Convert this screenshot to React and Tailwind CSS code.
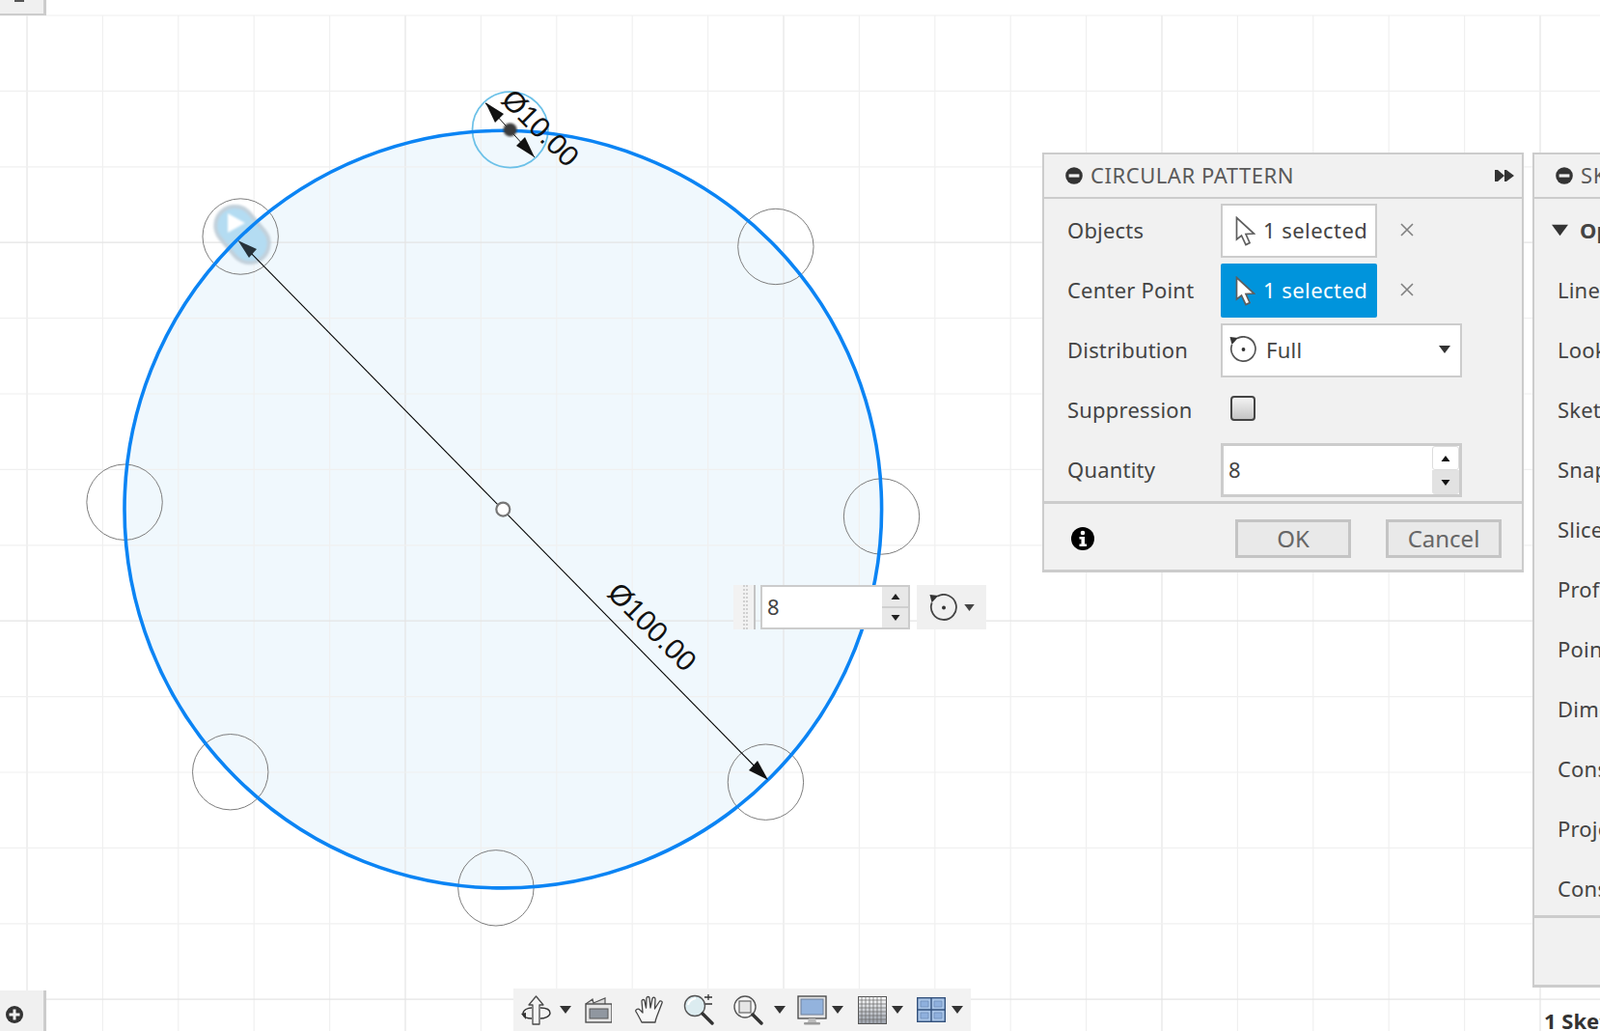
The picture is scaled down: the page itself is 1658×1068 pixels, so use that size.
import React from "react";

const CX = 521.3, CY = 527.6, R = 392.3, r = 39.2;
const minorX = Array.from({ length: 21 }, (_, i) => 28 + 78.4 * i);
const minorY = Array.from({ length: 14 }, (_, i) => 16 + 78.4 * i);
const pts = Array.from({ length: 8 }, (_, i) => {
  const a = ((1.08 + 45 * i) * Math.PI) / 180;
  return [CX + R * Math.sin(a), CY - R * Math.cos(a)];
});

function Canvas() {
  return (
    <svg className="absolute inset-0" width="1658" height="1068" viewBox="0 0 1658 1068">
      <defs>
        <filter id="soft"><feGaussianBlur stdDeviation="1" /></filter>
        <filter id="soft2"><feGaussianBlur stdDeviation="0.8" /></filter>
      </defs>
      <circle cx={CX} cy={CY} r={R} fill="#f0f8fd" />
      {minorX.map((x, i) => (
        <line key={i} x1={x} x2={x} y1="16" y2="1068" stroke={i % 5 === 0 ? "#e4e4e4" : "#f0f0f0"} strokeWidth="1.2" />
      ))}
      {minorY.map((y, i) => (
        <line key={i} x1="0" x2="1658" y1={y} y2={y} stroke={i % 5 === 3 ? "#e4e4e4" : "#f0f0f0"} strokeWidth="1.2" />
      ))}
      <circle cx={pts[0][0]} cy={pts[0][1] - 1} r={r} fill="none" stroke="#6cc1e8" strokeWidth="1.8" />
      {pts.slice(1).map((p, i) => (
        <circle key={i} cx={p[0]} cy={p[1]} r={r} fill="none" stroke="#7d7d7d" strokeWidth="1" />
      ))}
      {/* start handle */}
      <g transform="rotate(50 251 243)">
        <rect x="219" y="223" width="64" height="40" rx="20" fill="#b4dcf2" stroke="#c2d0da" strokeWidth="4" filter="url(#soft2)" />
      </g>
      <path d="M236 221 L254 231 L236 241 Z" fill="#ffffff" filter="url(#soft2)" />
      <circle cx={CX} cy={CY} r={R} fill="none" stroke="#0b84f4" strokeWidth="3.6" />
      {/* large diameter */}
      <line x1="250" y1="252" x2="792" y2="804" stroke="#000" strokeWidth="1.1" />
      <path d="M246.5 249 L266 258 L258 267 Z" fill="#26323a" />
      <path d="M796 808 L776 798 L785 788 Z" fill="#111" />
      <circle cx={CX} cy={CY} r="7" fill="#ffffff" stroke="#777" strokeWidth="2.2" />
      <text transform="translate(628 616) rotate(45)" fontFamily="'Liberation Sans', sans-serif" fontSize="30" fill="#111">Ø100.00</text>
      {/* small diameter */}
      <line x1="503" y1="107" x2="554" y2="163" stroke="#111" strokeWidth="1" />
      <path d="M503 106 L522 118 L513 127 Z" fill="#111" />
      <path d="M554 163 L535 151 L544 142 Z" fill="#111" />
      <circle cx="528.6" cy="134.4" r="7" fill="#3a3a3a" filter="url(#soft)" />
      <text transform="translate(518 105) rotate(45)" fontFamily="'Liberation Sans', sans-serif" fontSize="30" fill="#111">Ø10.00</text>
    </svg>
  );
}

function Cursor() {
  return (
    <svg width="21" height="31" viewBox="0 0 21 31" className="shrink-0">
      <path d="M1.5 1.5 L1.5 24 L6.5 20 L11 29.5 L15 27.5 L11 18.5 L19.5 18 Z" fill="#ffffff" stroke="#5e5e5e" strokeWidth="1.7" strokeLinejoin="miter" />
    </svg>
  );
}

function Rotate({ size = 28, color = "#555" }) {
  return (
    <svg width={size} height={size} viewBox="0 0 28 28" className="shrink-0">
      <path d="M8 2.6 A12.6 12.6 0 1 1 2.6 9" fill="none" stroke={color} strokeWidth="1.7" />
      <path d="M0.5 1 L9 2 L2.5 9 Z" fill="#333" />
      <circle cx="14.5" cy="14" r="1.9" fill="#333" />
    </svg>
  );
}

function Caret({ w = 12, h = 8, color = "#333" }) {
  return (
    <svg width={w} height={h} viewBox="0 0 12 8" className="shrink-0">
      <path d="M0 0 H12 L6 8 Z" fill={color} />
    </svg>
  );
}

function MinusDot() {
  return (
    <svg width="18" height="18" viewBox="0 0 18 18" className="shrink-0">
      <circle cx="9" cy="9" r="8.8" fill="#333" />
      <rect x="3.6" y="7.4" width="10.8" height="3.2" fill="#eee" />
    </svg>
  );
}

function Close() {
  return (
    <svg width="14" height="14" viewBox="0 0 14 14" className="shrink-0">
      <path d="M1 1 L13 13 M13 1 L1 13" stroke="#808080" strokeWidth="1.6" />
    </svg>
  );
}

function Row({ label, children }) {
  return (
    <div className="flex h-[56px] items-center">
      <div className="w-[183px] pb-[2px] pl-[24px] text-[22px] leading-none tracking-[0.2px] text-[#444]">{label}</div>
      {children}
    </div>
  );
}

function Selection({ active }) {
  return (
    <div className={active
      ? "flex h-[56px] w-[162px] items-center rounded-[2px] bg-[#0094dc] pl-[15px] text-[22px] tracking-[0.45px] text-white"
      : "flex h-[56px] w-[162px] items-center border-2 border-[#cccccc] bg-white pl-[13px] text-[22px] tracking-[0.45px] text-[#444]"}>
      <Cursor />
      <span className="mb-[2px] ml-[8px] whitespace-nowrap">1 selected</span>
    </div>
  );
}

function CircularPanel() {
  return (
    <div className="absolute left-[1080px] top-[158px] flex w-[499px] flex-col bg-[#f1f1f1] [font-family:'Open_Sans',sans-serif]">
      <div className="flex h-[48px] items-center border-2 border-[#cccccc] pl-[22px] pr-[8px]">
        <MinusDot />
        <span className="mb-[1px] ml-[8px] text-[22px] tracking-[0.55px] text-[#5a5a5a]">CIRCULAR PATTERN</span>
        <svg width="20" height="12" viewBox="0 0 20 12" className="ml-auto">
          <path d="M0 0 H3 V12 H0 Z M3 0 L10 6 L3 12 Z M10 0 H12 V12 H10 Z M12 0 L20 6 L12 12 Z" fill="#333" />
        </svg>
      </div>
      <div className="flex flex-col gap-[6px] border-x-2 border-b-[3px] border-[#cccccc] pb-[4px] pt-[5px]">
        <Row label="Objects">
          <Selection />
          <div className="ml-[24px] mb-[2px]"><Close /></div>
        </Row>
        <Row label="Center Point">
          <Selection active />
          <div className="ml-[24px] mb-[2px]"><Close /></div>
        </Row>
        <Row label="Distribution">
          <div className="flex h-[56px] w-[250px] items-center border-2 border-[#cccccc] bg-white pl-[7px] pr-[10px] text-[22px] text-[#444]">
            <div className="mb-[2px]"><Rotate /></div>
            <span className="mb-[2px] ml-[10px] tracking-[0.3px]">Full</span>
            <div className="ml-auto mb-[2px]"><Caret /></div>
          </div>
        </Row>
        <Row label="Suppression">
          <div className="mb-[4px] ml-[10px] h-[26px] w-[26px] rounded-[4px] border-2 border-[#444] bg-gradient-to-b from-[#f4f4f4] to-[#c4c4c4]" />
        </Row>
        <Row label="Quantity">
          <div className="flex h-[56px] w-[250px] border-[3px] border-[#cccccc] bg-white">
            <div className="flex flex-1 items-center pb-[2px] pl-[5px] text-[22px] text-[#444]">8</div>
            <div className="flex w-[28px] flex-col">
              <div className="flex h-[25px] items-center justify-center rounded-[3px] border border-[#dddddd] bg-white"><div className="rotate-180"><Caret w={10} h={6} color="#111" /></div></div>
              <div className="flex flex-1 items-center justify-center rounded-b-[3px] bg-[#e2e2e2]"><Caret w={10} h={6} color="#111" /></div>
            </div>
          </div>
        </Row>
      </div>
      <div className="flex h-[71px] items-center border-x-2 border-b-[3px] border-[#cccccc] pl-[28px] pt-[3px]">
        <svg width="24" height="24" viewBox="0 0 24 24" className="shrink-0">
          <circle cx="12" cy="12" r="12" fill="#000" />
          <circle cx="12" cy="6" r="2.3" fill="#fff" />
          <path d="M8.5 10 H14 V17.5 H16 V20 H8.5 V17.5 H10.5 V12.5 H8.5 Z" fill="#fff" />
        </svg>
        <button className="ml-[146px] h-[40px] w-[120px] border-[3px] border-[#c4c4c4] bg-[#e9e9e9] text-[24px] leading-none text-[#666]">OK</button>
        <button className="ml-[36px] h-[40px] w-[120px] border-[3px] border-[#c4c4c4] bg-[#e9e9e9] text-[24px] leading-none text-[#666]">Cancel</button>
      </div>
    </div>
  );
}

const paletteRows = ["Linetype", "Look At", "Sketch Grid", "Snap", "Slice", "Profile", "Points", "Dimensions", "Constraints", "Projected", "Construction"];

function PalettePanel() {
  return (
    <div className="absolute left-[1588px] top-[158px] flex w-[300px] flex-col bg-[#f1f1f1] [font-family:'Open_Sans',sans-serif]">
      <div className="flex h-[48px] items-center border-2 border-[#cccccc] pl-[22px]">
        <MinusDot />
        <span className="mb-[1px] ml-[8px] text-[22px] tracking-[0.55px] text-[#5a5a5a]">SKETCH PALETTE</span>
      </div>
      <div className="flex h-[745px] flex-col overflow-hidden border-x-2 border-b-[3px] border-[#cccccc] pt-[2px]">
        <div className="flex h-[62px] shrink-0 items-center pb-[2px] pl-[18px]">
          <Caret w={17} h={13} color="#333" />
          <span className="ml-[12px] text-[22px] font-bold text-[#444]">Options</span>
        </div>
        {paletteRows.map((t) => (
          <div key={t} className="flex h-[62px] shrink-0 items-center pb-[2px] pl-[24px] text-[22px] tracking-[0.2px] text-[#444]">{t}</div>
        ))}
      </div>
      <div className="h-[72px] border-x-2 border-b-[3px] border-[#cccccc]" />
    </div>
  );
}

function FloatingInput() {
  return (
    <div className="absolute left-[760px] top-[606px] flex h-[46px] items-stretch [font-family:'Open_Sans',sans-serif]">
      <div className="flex w-[23px] justify-end bg-[#f2f2f2]">
        <div className="mr-[6px] w-[5px] border-x-2 border-dotted border-[#d0d0d0]" />
        <div className="w-[2px] bg-[#c4c4c4]" />
      </div>
      <div className="ml-[5px] flex w-[155px] border-2 border-[#cccccc] bg-white">
        <div className="flex flex-1 items-center pb-[2px] pl-[5px] text-[22px] text-[#444]">8</div>
        <div className="flex w-[27px] flex-col bg-[#e8e8e8]">
          <div className="flex flex-1 items-center justify-center border-b-2 border-[#cfcfcf]"><div className="rotate-180"><Caret w={10} h={6} color="#222" /></div></div>
          <div className="flex flex-1 items-center justify-center"><Caret w={10} h={6} color="#222" /></div>
        </div>
      </div>
      <div className="ml-[7px] flex w-[72px] items-center bg-[#f0f0f0] pl-[13px]">
        <Rotate size={29} color="#444" />
        <div className="ml-[7px]"><Caret w={11} h={7} color="#444" /></div>
      </div>
    </div>
  );
}

function Toolbar() {
  return (
    <div className="absolute left-[532px] top-[1024px] flex h-[44px] w-[474px] items-center bg-[#f2f2f2] pl-[8px]">
      {/* orbit */}
      <svg width="31" height="31" viewBox="0 0 31 31" className="shrink-0">
        <path d="M2 19 C2 15 7 13 11 13 M20 13 C26 13 30 15 30 18.5 C30 22 24 24 20 24 M11 24 C6 24 3 23 2 20" fill="none" stroke="#333" strokeWidth="1.4" />
        <path d="M0 19 L5 18 L5 25 Z" fill="#333" />
        <path d="M15.5 1 L23 10 H19 V30 H12 V10 H8 Z" fill="#f5f5f5" stroke="#4a4a4a" strokeWidth="1.3" strokeLinejoin="round" />
      </svg>
      <div className="ml-[9px]"><Caret /></div>
      {/* capture */}
      <svg width="28" height="28" viewBox="0 0 28 28" className="ml-[14px] shrink-0">
        <path d="M1 8 L8 3 L9 7 L21 2 V8" fill="#dcdcdc" stroke="#555" strokeWidth="1.2" />
        <rect x="1" y="8" width="27" height="19" fill="#e6e6e6" stroke="#444" strokeWidth="1.3" />
        <rect x="5" y="13" width="19" height="10" fill="#9097a0" stroke="#555" />
      </svg>
      {/* hand */}
      <svg width="31" height="30" viewBox="0 0 31 30" className="ml-[24px] shrink-0">
        <path d="M7 28 C5 24 3 20 1 17 C0 15 3 13 5 15 L8 18 L7 6 C7 4 10 4 10 6 L11.5 13 L12 3 C12 1 15 1 15 3 L16 13 L18 3.5 C18.5 1.5 21 2 21 4 L20.5 14 L25 7 C26 5 29 6 28 8 L23 21 C22 24 21 26 21 28 Z" fill="#f7f7f7" stroke="#444" strokeWidth="1.3" strokeLinejoin="round" />
      </svg>
      {/* zoom + */}
      <svg width="32" height="32" viewBox="0 0 32 32" className="ml-[19px] shrink-0">
        <circle cx="12" cy="12" r="10.5" fill="#dcecf0" stroke="#555" strokeWidth="1.4" />
        <path d="M5 11 C6 7 9 5 13 4" fill="none" stroke="#fff" strokeWidth="2" />
        <path d="M20 20 L30 30" stroke="#333" strokeWidth="3.4" strokeLinecap="round" />
        <path d="M22 3 H30 M26 0 V6 M23 10 H30" stroke="#333" strokeWidth="1.3" />
      </svg>
      {/* zoom window */}
      <svg width="31" height="31" viewBox="0 0 31 31" className="ml-[20px] shrink-0">
        <circle cx="12" cy="12" r="11" fill="#f4f4f4" stroke="#555" strokeWidth="1.4" />
        <rect x="6" y="6" width="12" height="12" fill="#e6e6e6" stroke="#666" strokeWidth="1.2" />
        <path d="M20 20 L29 29" stroke="#333" strokeWidth="3.4" strokeLinecap="round" />
      </svg>
      <div className="ml-[11px]"><Caret /></div>
      {/* display */}
      <svg width="31" height="31" viewBox="0 0 31 31" className="ml-[12px] shrink-0">
        <rect x="1" y="1" width="29" height="23" fill="#e4e4e4" stroke="#444" strokeWidth="1.3" />
        <rect x="4" y="4" width="23" height="16" fill="#93b3dd" stroke="#6c7f99" />
        <path d="M12 24 H19 L20 28 H11 Z" fill="#bbb" />
        <rect x="7" y="28" width="17" height="2.4" rx="1" fill="#999" />
      </svg>
      <div className="ml-[5px]"><Caret /></div>
      {/* grid */}
      <svg width="30" height="29" viewBox="0 0 30 29" className="ml-[15px] shrink-0">
        <defs>
          <linearGradient id="gridfill" x1="0" y1="0" x2="0" y2="1"><stop offset="0" stopColor="#ffffff" /><stop offset="1" stopColor="#9aa0aa" /></linearGradient>
        </defs>
        <rect x="0.5" y="0.5" width="29" height="28" fill="url(#gridfill)" stroke="#555" />
        <path d="M4 0V29M8 0V29M12 0V29M16 0V29M20 0V29M24 0V29M0 4H30M0 8H30M0 12H30M0 16H30M0 20H30M0 24H30" stroke="#666" strokeWidth="0.7" />
      </svg>
      <div className="ml-[5px]"><Caret /></div>
      {/* viewports */}
      <svg width="30" height="26" viewBox="0 0 30 26" className="ml-[14px] shrink-0">
        <rect x="0.7" y="0.7" width="28.6" height="24.6" fill="#a9c5e8" stroke="#33517c" strokeWidth="1.4" />
        <path d="M15 0V26M0 13H30" stroke="#33517c" strokeWidth="1.4" />
        <path d="M4 4H12V10H4Z M18 4H26V10H18Z M4 16H12V22H4Z M18 16H26V22H18Z" fill="#8fb0dd" stroke="#6c8bb5" strokeWidth="0.7" />
      </svg>
      <div className="ml-[6px]"><Caret /></div>
    </div>
  );
}

export default function App() {
  return (
    <div className="relative h-[1068px] w-[1658px] overflow-hidden bg-white">
      <Canvas />
      <div className="absolute left-0 top-0 flex h-[16px] w-[48px] justify-center border-b-[2px] border-r-[3px] border-[#cccccc] bg-[#f0f0f0]">
        <div className="mr-[6px] h-[2px] w-[10px] bg-[#555]" />
      </div>
      <div className="absolute bottom-0 left-0 flex h-[42px] w-[48px] items-center border-r-[3px] border-[#cccccc] bg-[#f0f0f0] pl-[6px] pt-[8px]">
        <svg width="18" height="18" viewBox="0 0 18 18">
          <circle cx="9" cy="9" r="9" fill="#333" />
          <path d="M9 3.5 V14.5 M3.5 9 H14.5" stroke="#f0f0f0" strokeWidth="3" />
        </svg>
      </div>
      <FloatingInput />
      <CircularPanel />
      <PalettePanel />
      <div className="absolute left-[1600px] top-[1043px] whitespace-nowrap text-[22px] font-bold leading-[28px] text-[#333] [font-family:'Open_Sans',sans-serif]">1 Sketch Point</div>
      <Toolbar />
    </div>
  );
}
